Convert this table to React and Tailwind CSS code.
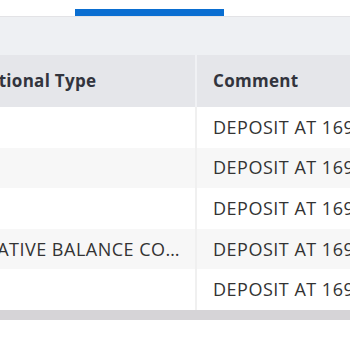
import React from "react";

const rows = [
  { type: "", comment: "DEPOSIT AT 1695432" },
  { type: "", comment: "DEPOSIT AT 1695433" },
  { type: "", comment: "DEPOSIT AT 1695434" },
  { type: "NEGATIVE BALANCE CORRECTION ADJUSTMENT", comment: "DEPOSIT AT 1695435" },
  { type: "", comment: "DEPOSIT AT 1695436" },
];

export default function App() {
  return (
    <div
      className="w-[350px] h-[350px] bg-white overflow-hidden text-[#333333]"
      style={{ fontFamily: '"Open Sans", "Noto Sans", sans-serif' }}
    >
      <div className="h-[17px] border-b border-[#e3e3e6] bg-white pl-[75px] pt-[9px]">
        <div className="w-[149px] h-[7px] bg-[#0a6ed1]" />
      </div>
      <div className="h-[38px] bg-[#eef0f3]" />
      <div className="overflow-hidden">
        <div className="-ml-[57px] w-[650px]">
          <div className="flex h-[52px] bg-[#e5e6ea] text-[17px] font-bold tracking-[0.3px] text-[#32343d]">
            <div className="w-[254px] pl-4 pr-3 flex items-center border-r-2 border-[#f0f1f4]">
              Additional Type
            </div>
            <div className="flex-1 px-[16px] flex items-center">Comment</div>
          </div>
          {rows.map((r, i) => (
            <div
              key={i}
              className={`flex h-[40.6px] text-[18px] tracking-[0.5px] ${i % 2 === 1 ? "bg-[#f7f7f7]" : "bg-white"}`}
            >
              <div className="w-[254px] pl-4 pr-2 flex items-center border-r-2 border-[#f0f0f0] min-w-0">
                <span className="truncate">{r.type}</span>
              </div>
              <div className="flex-1 px-[16px] flex items-center whitespace-nowrap">
                {r.comment}
              </div>
            </div>
          ))}
        </div>
      </div>
      <div className="h-[10px] bg-[#d6d4d7]" />
    </div>
  );
}
